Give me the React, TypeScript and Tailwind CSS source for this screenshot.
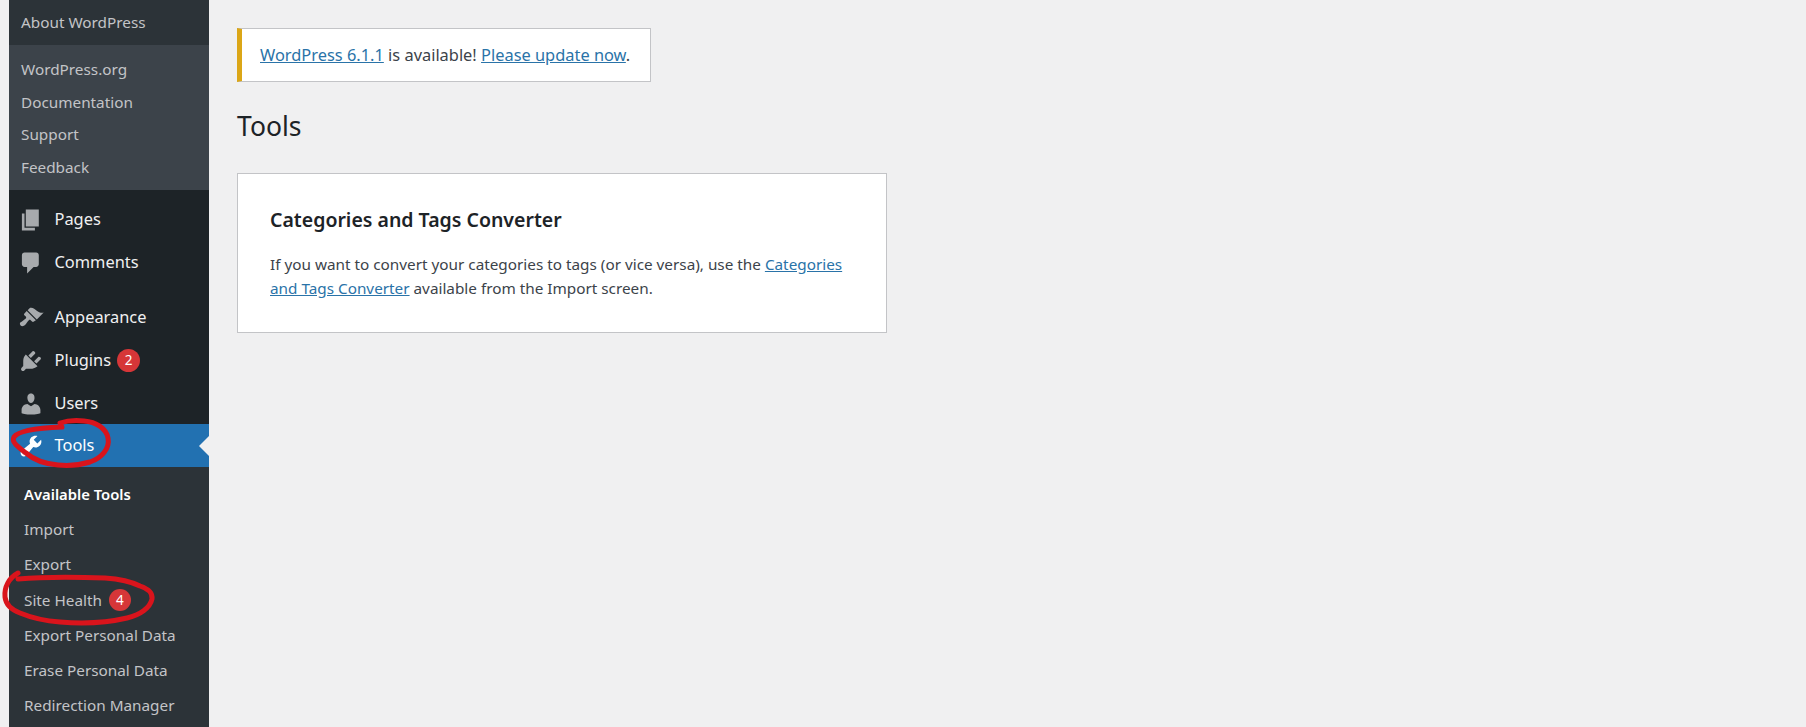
const FONT = "font-['Noto_Sans','Open_Sans',sans-serif]";

const ICONS = {
  pages: "M6 15V2h10v13H6zm-1 1h8v2H3V5h2v11z",
  comments: "M5 2h9c1.1 0 2 .9 2 2v7c0 1.1-.9 2-2 2h-2l-5 5v-5H5c-1.1 0-2-.9-2-2V4c0-1.1.9-2 2-2z",
  appearance:
    "M14.48 11.06L7.41 3.99l1.5-1.5c.5-.56 2.3-.47 3.51.32 1.21.8 1.43 1.28 2.91 2.1 1.18.64 2.45 1.26 4.45.85zm-.71.71L6.7 4.7 4.93 6.47c-.39.39-.39 1.02 0 1.41l1.06 1.06c.39.39.39 1.03 0 1.42-.6.6-1.43 1.11-2.21 1.69-.35.26-.7.53-1.01.84C1.43 13.23.95 14.63 2 15.68c1.05 1.05 2.45.57 3.8-.77.31-.31.58-.66.84-1.01.58-.78 1.09-1.61 1.69-2.21.39-.39 1.03-.39 1.42 0l1.06 1.06c.39.39 1.02.39 1.41 0z",
  plugins:
    "M13.11 4.36L9.87 7.6 8 5.73l3.24-3.24c.35-.34 1.05-.2 1.56.32.52.51.66 1.21.31 1.55zm-8 1.77l.91-1.12 9.01 9.01-1.19.84c-.71.71-2.63 1.16-3.82 1.16H6.14L4.9 17.26c-.59.59-1.54.59-2.12 0-.59-.58-.59-1.53 0-2.12l1.24-1.24v-3.88c0-1.13.4-3.19 1.09-3.89zm7.26 3.97l3.24-3.24c.34-.35 1.04-.21 1.55.31.52.51.66 1.21.31 1.55l-3.24 3.25z",
  users:
    "M10 9.25c-2.27 0-2.73-3.44-2.73-3.44C7 4.02 7.82 2 9.97 2c2.16 0 2.98 2.02 2.71 3.81 0 0-.41 3.44-2.68 3.44zm0 2.57L12.72 10c2.39 0 4.52 2.33 4.52 4.53v2.49s-3.65 1.13-7.24 1.13c-3.65 0-7.24-1.13-7.24-1.13v-2.49c0-2.25 1.94-4.48 4.47-4.48z",
  tools:
    "M16.68 9.77c-1.34 1.34-3.3 1.67-4.95.99l-5.41 6.52c-.99.99-2.59.99-3.58 0s-.99-2.59 0-3.57l6.52-5.42c-.68-1.65-.35-3.61.99-4.95 1.28-1.28 3.12-1.62 4.72-1.06l-2.89 2.89 2.82 2.82 2.86-2.87c.53 1.58.18 3.39-1.08 4.65zM3.81 16.21c.4.39 1.04.39 1.43 0 .4-.4.4-1.04 0-1.43-.39-.4-1.03-.4-1.43 0-.39.39-.39 1.03 0 1.43z",
};

function MenuItem({ icon, label, badge, active }: { icon: keyof typeof ICONS; label: string; badge?: string; active?: boolean }) {
  return (
    <div className={`flex h-[43px] items-center pl-[9px] ${active ? "bg-[#2271b1] text-white" : "pt-[2px] text-[#f0f0f1]"}`}>
      <svg viewBox="0 0 20 20" className={`h-[26px] w-[26px] ${active ? "fill-white" : "fill-[#a7aaad]"}`}>
        <path d={ICONS[icon]} />
      </svg>
      <span className="ml-[10.5px] text-[16.4px]">{label}</span>
      {badge && (
        <span className="ml-[6px] flex h-[23px] w-[23px] items-center justify-center rounded-full bg-[#d63638] text-[13.5px] text-white">
          {badge}
        </span>
      )}
    </div>
  );
}

function SubItem({ label, bold, badge }: { label: string; bold?: boolean; badge?: string }) {
  return (
    <div className={`flex h-[35.3px] items-center pl-[15px] text-[15.3px] ${bold ? "font-semibold text-white" : "text-[#c3c4c7]"}`}>
      <span className={bold ? "text-[14.8px]" : ""}>{label}</span>
      {badge && (
        <span className="ml-[7px] flex h-[22px] w-[22px] items-center justify-center rounded-full bg-[#d63638] text-[13.5px] text-white">
          {badge}
        </span>
      )}
    </div>
  );
}

export default function App() {
  return (
    <div className={`relative flex h-[727px] w-[1806px] overflow-hidden bg-[#f0f0f1] pl-[9px] ${FONT}`}>
      <aside className="flex w-[200px] shrink-0 flex-col bg-[#1d2327]">
        <div className="flex h-[45px] items-center bg-[#2c3338] pl-[12px] text-[15.3px] text-[#c3c4c7]">About WordPress</div>
        <div className="flex h-[145px] flex-col bg-[#3c434a] pt-[8.5px] text-[15.3px] text-[#c3c4c7]">
          {["WordPress.org", "Documentation", "Support", "Feedback"].map((t) => (
            <div key={t} className="flex h-[32.5px] items-center pl-[12px]">
              {t}
            </div>
          ))}
        </div>
        <div className="pt-[7px]">
          <MenuItem icon="pages" label="Pages" />
          <MenuItem icon="comments" label="Comments" />
        </div>
        <div className="pt-[12px]">
          <MenuItem icon="appearance" label="Appearance" />
          <MenuItem icon="plugins" label="Plugins" badge="2" />
          <MenuItem icon="users" label="Users" />
          <div className="relative">
            <MenuItem icon="tools" label="Tools" active />
            <div className="absolute right-0 top-[12px] h-0 w-0 border-y-[10px] border-r-[10px] border-y-transparent border-r-[#f0f0f1]" />
          </div>
        </div>
        <div className="flex-1 bg-[#2c3338] pt-[9.5px]">
          <SubItem label="Available Tools" bold />
          <SubItem label="Import" />
          <SubItem label="Export" />
          <SubItem label="Site Health" badge="4" />
          <SubItem label="Export Personal Data" />
          <SubItem label="Erase Personal Data" />
          <SubItem label="Redirection Manager" />
        </div>
      </aside>

      <main className="flex-1 pl-[28px] pt-[28px]">
        <div className="flex h-[54px] w-[414px] items-center border border-l-[5px] border-[#c3c4c7] border-l-[#dba617] bg-white pl-[18px] text-[16.4px] text-[#3c434a]">
          <p>
            <a className="text-[#2a73a8] underline">WordPress 6.1.1</a> is available!{" "}
            <a className="text-[#2a73a8] underline">Please update now</a>.
          </p>
        </div>
        <h1 className="mt-[26px] text-[26.5px] leading-[36px] text-[#1d2327]">Tools</h1>
        <div className="mt-[29px] h-[160px] w-[650px] border border-[#c3c4c7] bg-white pl-[32px] pt-[33px]">
          <h2 className="text-[19.5px] font-semibold leading-[26px] text-[#1d2327]">Categories and Tags Converter</h2>
          <p className="mt-[19px] text-[15.3px] leading-[24px] text-[#3c434a]">
            If you want to convert your categories to tags (or vice versa), use the{" "}
            <a className="text-[#2a73a8] underline">Categories</a>
            <br />
            <a className="text-[#2a73a8] underline">and Tags Converter</a> available from the Import screen.
          </p>
        </div>
      </main>

      <svg className="pointer-events-none absolute left-0 top-0 h-[727px] w-[240px]" viewBox="0 0 240 727" fill="none">
        <path
          d="M60 423C66 421 74 420 84 421C96 422 106 428 108 438C110 448 102 458 90 462C80 465 68 466 58 465C46 464 34 460 26 453C18 447 11 442 14 437C18 431 36 428 62 427"
          stroke="#d9141c"
          strokeWidth="5"
          strokeLinecap="round"
        />
        <path
          d="M18 573C9 578 4 587 5 597C6 606 12 610 20 613C32 618 46 621 60 622C84 624 110 622 127 618C140 615 150 608 152 599C153 592 146 588 140 586C130 581 120 579 105 578C80 577 40 577 18 579"
          stroke="#d9141c"
          strokeWidth="5"
          strokeLinecap="round"
        />
      </svg>
    </div>
  );
}
